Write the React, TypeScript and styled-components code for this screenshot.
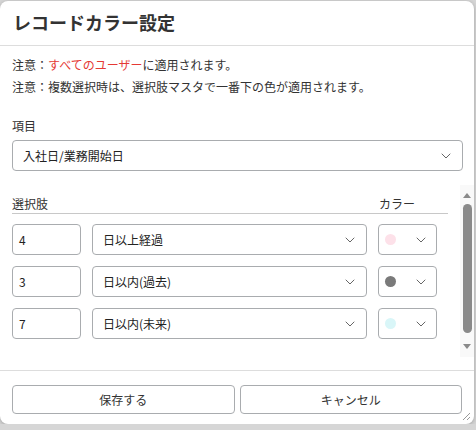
import styled, { createGlobalStyle } from "styled-components";
import { ChevronDown } from "lucide-react";

const GlobalStyle = createGlobalStyle`
  html, body {
    margin: 0;
    padding: 0;
    background: #d6d6d6;
    font-family: "Noto Sans CJK JP", "Noto Sans", sans-serif;
    color: #333;
  }
  * { box-sizing: border-box; }
`;

const Dialog = styled.div`
  width: 474px;
  height: 423px;
  margin-top: 1px;
  background: #fff;
  border-radius: 8px;
  box-shadow: 0 1px 4px rgba(0, 0, 0, 0.25);
  display: flex;
  flex-direction: column;
  overflow: hidden;
`;

const Header = styled.div`
  height: 45px;
  flex-shrink: 0;
  display: flex;
  align-items: center;
  padding: 0 13px 2px;
  border-bottom: 1px solid #ddd;
  font-size: 18px;
  font-weight: 700;
  color: #333;
`;

const Body = styled.div`
  flex: 1;
  display: flex;
  flex-direction: column;
  padding: 8px 0 13px 12px;
  min-height: 0;
`;

const Note = styled.p`
  margin: 0;
  font-size: 12px;
  line-height: 22px;
  color: #333;
`;

const Accent = styled.span`
  color: #e53935;
`;

const Label = styled.div`
  margin-top: 18px;
  font-size: 12px;
  line-height: 20px;
`;

const SelectBox = styled.div<{ $width: number }>`
  width: ${(p) => p.$width}px;
  height: 31px;
  flex-shrink: 0;
  display: flex;
  align-items: center;
  justify-content: space-between;
  padding: 0 8px 0 10px;
  border: 1px solid #a9acaf;
  border-radius: 4px;
  font-size: 12px;
  color: #222;
  background: #fff;

  svg {
    color: #666;
  }
`;

const MainSelect = styled(SelectBox)`
  margin-top: 4px;
`;

const ScrollArea = styled.div`
  margin-top: 14px;
  height: 172px;
  display: flex;
  justify-content: space-between;
  overflow: hidden;
`;

const Table = styled.div`
  width: 437px;
`;

const HeadRow = styled.div`
  display: flex;
  justify-content: space-between;
  align-items: flex-end;
  width: 436px;
  height: 29px;
  padding: 0 33px 1px 0;
  border-bottom: 1px solid #c8c8c8;
  font-size: 12px;
  line-height: 16px;
`;

const Rows = styled.div`
  display: flex;
  flex-direction: column;
  gap: 11px;
  margin-top: 10px;
`;

const Row = styled.div`
  display: flex;
  gap: 11px;
`;

const NumberInput = styled.div`
  width: 69px;
  height: 31px;
  display: flex;
  align-items: center;
  padding-left: 6px;
  border: 1px solid #a9acaf;
  border-radius: 4px;
  font-size: 12px;
  color: #222;
`;

const ColorBox = styled(SelectBox)`
  padding: 0 7px 0 6px;
`;

const Dot = styled.span<{ $color: string }>`
  width: 11px;
  height: 11px;
  border-radius: 50%;
  background: ${(p) => p.$color};
`;

/* vertical scrollbar beside the choice list */
const ScrollTrack = styled.div`
  width: 14px;
  flex-shrink: 0;
  display: flex;
  flex-direction: column;
  align-items: center;
  padding-top: 8px;
  background: #f9f9f9;
`;

const Arrow = styled.span<{ $down?: boolean }>`
  width: 0;
  height: 0;
  border-left: 4px solid transparent;
  border-right: 4px solid transparent;
  ${(p) =>
    p.$down
      ? "border-top: 5px solid #8a8a8a; margin-top: 11px;"
      : "border-bottom: 5px solid #8a8a8a;"}
`;

const Thumb = styled.span`
  width: 9px;
  height: 129px;
  margin-top: 6px;
  border-radius: 5px;
  background: #8a8a8a;
`;

const Footer = styled.div`
  position: relative;
  flex-shrink: 0;
  height: 54px;
  display: flex;
  gap: 5px;
  padding: 14px 12px 0;
  border-top: 1px solid #ddd;
`;

const Button = styled.button`
  flex: 1;
  height: 29px;
  border: 1px solid #a9acaf;
  border-radius: 4px;
  background: #fff;
  font-family: inherit;
  font-size: 12px;
  color: #333;
`;

/* resize grip in the dialog's corner */
const Grip = styled.svg`
  position: absolute;
  right: 3px;
  bottom: 3px;
`;

const rows = [
  { days: "4", kind: "日以上経過", color: "#fde1e9" },
  { days: "3", kind: "日以内(過去)", color: "#7a7a7a" },
  { days: "7", kind: "日以内(未来)", color: "#d9f6f8" },
];

export default function App() {
  return (
    <>
      <GlobalStyle />
      <Dialog>
        <Header>レコードカラー設定</Header>
        <Body>
          <Note>
            注意：<Accent>すべてのユーザー</Accent>に適用されます。
          </Note>
          <Note>注意：複数選択時は、選択肢マスタで一番下の色が適用されます。</Note>
          <Label>項目</Label>
          <MainSelect $width={451}>
            入社日/業務開始日
            <ChevronDown size={16} strokeWidth={1.5} />
          </MainSelect>
          <ScrollArea>
            <Table>
              <HeadRow>
                <span>選択肢</span>
                <span>カラー</span>
              </HeadRow>
              <Rows>
                {rows.map((r) => (
                  <Row key={r.days}>
                    <NumberInput>{r.days}</NumberInput>
                    <SelectBox $width={275}>
                      {r.kind}
                      <ChevronDown size={16} strokeWidth={1.5} />
                    </SelectBox>
                    <ColorBox $width={59}>
                      <Dot $color={r.color} />
                      <ChevronDown size={16} strokeWidth={1.5} />
                    </ColorBox>
                  </Row>
                ))}
              </Rows>
            </Table>
            <ScrollTrack>
              <Arrow />
              <Thumb />
              <Arrow $down />
            </ScrollTrack>
          </ScrollArea>
        </Body>
        <Footer>
          <Button>保存する</Button>
          <Button>キャンセル</Button>
          <Grip width="10" height="10" viewBox="0 0 10 10">
            <path d="M9 2 L2 9 M9 6 L6 9" stroke="#999" strokeWidth="1" fill="none" />
          </Grip>
        </Footer>
      </Dialog>
    </>
  );
}
